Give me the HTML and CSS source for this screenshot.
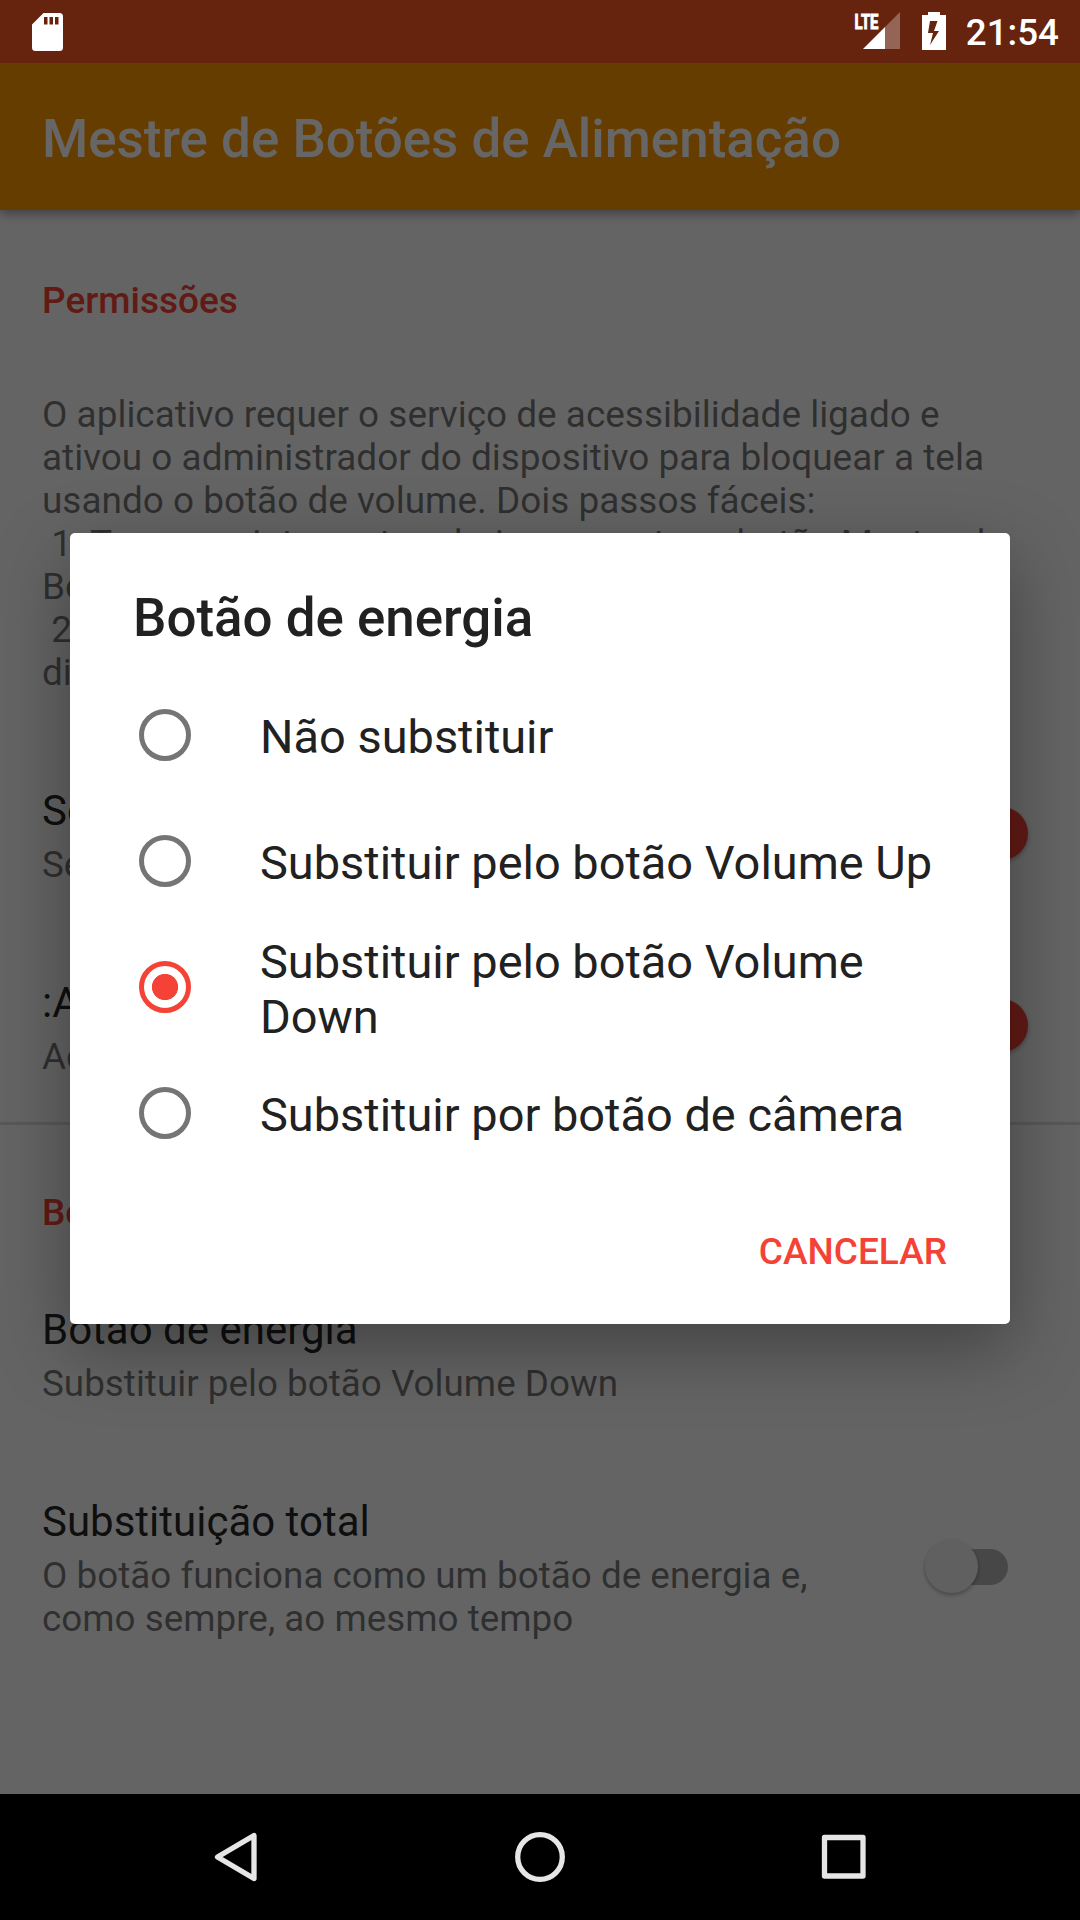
FILE: index.html
```html
<!DOCTYPE html>
<html lang="pt">
<head>
    <meta charset="UTF-8">
    <meta name="viewport" content="width=device-width, initial-scale=1.0">
    <title>Mestre de Botões de Alimentação</title>
    <link rel="stylesheet" href="styles.css">
</head>
<body>
    <div class="screen">
        <!-- Status bar -->
        <div class="status-bar">
            <svg class="sd-icon" width="31" height="38" viewBox="0 0 31 38">
                <path fill="#fff" fill-rule="evenodd" d="M11.500 0H27.500a3.500 3.500 0 0 1 3.500 3.500V34.500a3.500 3.500 0 0 1-3.500 3.500H3.500A3.500 3.500 0 0 1 0 34.500V11.500zM12 4v7.500h3.500V4zM17.500 4v7.500h3.500V4zM23 4v7.500h3.500V4z"/>
            </svg>
            <div class="status-right">
                <svg class="signal-icon" width="46" height="38" viewBox="0 0 46 38">
                    <path fill="#fff" fill-opacity="0.3" d="M46 0v37H31V15z"/>
                    <path fill="#fff" d="M31 15v22H9z"/>
                    <text x="0.500" y="17" class="lte" textLength="24" lengthAdjust="spacingAndGlyphs">LTE</text>
                </svg>
                <svg class="battery-icon" width="24" height="38" viewBox="0 0 24 38">
                    <path fill="#fff" fill-rule="evenodd" d="M6 0h12v3h6v35H0V3h6zM8 9L6 21h5L8 33L17 19h-5L15.500 9z"/>
                </svg>
                <span class="clock">21:54</span>
            </div>
        </div>

        <header class="app-bar">
            <h1>Mestre de Botões de Alimentação</h1>
        </header>

        <main class="settings">
            <h2 class="category">Permissões</h2>
            <p class="description">O aplicativo requer o serviço de acessibilidade ligado e<br>ativou o administrador do dispositivo para bloquear a tela<br>usando o botão de volume. Dois passos fáceis:<br>&nbsp;1. Toque no interruptor abaixo e mostre o botão Mestre de<br>Bo<br>&nbsp;2.<br>di</p>
            <div class="pref">
                <div class="pref-text">
                    <div class="pref-title">Se</div>
                    <div class="pref-summary">Se</div>
                </div>
                <div class="switch on"></div>
            </div>
            <div class="pref">
                <div class="pref-text">
                    <div class="pref-title">:A</div>
                    <div class="pref-summary">Ad</div>
                </div>
                <div class="switch on"></div>
            </div>

            <h2 class="category divided">Bo</h2>
            <div class="pref">
                <div class="pref-text">
                    <div class="pref-title">Botão de energia</div>
                    <div class="pref-summary">Substituir pelo botão Volume Down</div>
                </div>
            </div>
            <div class="pref">
                <div class="pref-text">
                    <div class="pref-title">Substituição total</div>
                    <div class="pref-summary">O botão funciona como um botão de energia e,<br>como sempre, ao mesmo tempo</div>
                </div>
                <div class="switch"></div>
            </div>
        </main>

        <nav class="nav-bar">
            <svg width="50" height="50" viewBox="0 0 50 50"><path d="M43 3.500v43L6.500 25z"/></svg>
            <svg width="50" height="50" viewBox="0 0 50 50"><circle cx="25" cy="25" r="22.300"/></svg>
            <svg width="50" height="50" viewBox="0 0 50 50"><rect x="5.500" y="5.500" width="38.500" height="38.500"/></svg>
        </nav>

        <!-- Dialog over the settings list -->
        <div class="scrim">
            <div class="dialog">
                <h2>Botão de energia</h2>
                <div class="option"><span class="radio"></span><span class="label">Não substituir</span></div>
                <div class="option"><span class="radio"></span><span class="label">Substituir pelo botão Volume Up</span></div>
                <div class="option"><span class="radio checked"></span><span class="label">Substituir pelo botão Volume<br>Down</span></div>
                <div class="option"><span class="radio"></span><span class="label">Substituir por botão de câmera</span></div>
                <button type="button">CANCELAR</button>
            </div>
        </div>
    </div>
</body>
</html>
```
FILE: styles.css
```css
* {
    box-sizing: border-box;
}
body {
    margin: 0;
    font-family: Roboto, sans-serif;
    background: #fafafa;
}
h1, h2, p {
    margin: 0;
}
.screen {
    position: relative;
    display: flex;
    flex-direction: column;
    width: 1080px;
    height: 1920px;
    overflow: hidden;
}

/* system bars */
.status-bar {
    position: relative;
    z-index: 2;
    display: flex;
    flex: none;
    justify-content: space-between;
    height: 63px;
    padding: 0 21px 0 32px;
    background: #66230e;
}
.sd-icon {
    margin-top: 12.5px;
}
.status-right {
    display: flex;
}
.signal-icon {
    margin-top: 12px;
    overflow: visible;
}
.battery-icon {
    margin: 12px 20px 0 22px;
}
.lte {
    fill: #fff;
    stroke: #fff;
    stroke-width: 1;
    font-size: 21px;
    font-weight: 700;
}
.clock {
    color: #fff;
    font-size: 36.75px;
    font-weight: 500;
    line-height: 66px;
}
.nav-bar {
    position: relative;
    z-index: 2;
    display: flex;
    flex: none;
    justify-content: center;
    align-items: center;
    gap: 254px;
    height: 126px;
    background: #000;
}
.nav-bar svg {
    fill: none;
    stroke: #e6e6e6;
    stroke-width: 5.3;
    stroke-linejoin: round;
}

/* settings page */
.app-bar {
    position: relative;
    z-index: 1;
    flex: none;
    height: 147px;
    padding-left: 42px;
    background: #ff9800;
    box-shadow: 0 4px 10px rgba(0, 0, 0, 0.35);
}
.app-bar h1 {
    color: #fff;
    font-size: 52.9px;
    font-weight: 500;
    line-height: 152px;
}
.settings {
    flex: 1;
    min-height: 0;
}
.category {
    height: 133px;
    padding: 69px 42px 0;
    color: #f44336;
    font-size: 37px;
    font-weight: 500;
    line-height: 43px;
}
.category.divided {
    margin-top: 2px;
    border-top: 3px solid #dbdbdb;
    padding-top: 66px;
}
.description {
    padding: 50px 42px 42px;
    color: rgba(0, 0, 0, 0.54);
    font-size: 36.95px;
    line-height: 43px;
    white-space: nowrap;
}
.pref {
    display: flex;
    justify-content: space-between;
    align-items: center;
    padding: 50px 50px 42px 42px;
}
.pref-title {
    margin-bottom: 8px;
    color: rgba(0, 0, 0, 0.87);
    font-size: 42px;
    line-height: 49px;
}
.pref-summary {
    color: rgba(0, 0, 0, 0.54);
    font-size: 36.85px;
    line-height: 43px;
}
.switch {
    position: relative;
    width: 105px;
    height: 53px;
    margin-bottom: 5px;
}
.switch::before {
    content: "";
    position: absolute;
    left: 22px;
    top: 9px;
    width: 61px;
    height: 36px;
    border-radius: 18px;
    background: #b2b2b2;
}
.switch::after {
    content: "";
    position: absolute;
    left: 0;
    top: 0;
    width: 53px;
    height: 53px;
    border-radius: 50%;
    background: #f1f1f1;
    box-shadow: 0 2px 4px rgba(0, 0, 0, 0.3);
}
.switch.on::before {
    background: #f8a19b;
}
.switch.on::after {
    left: 50px;
    background: #f44336;
}

/* dialog */
.scrim {
    position: absolute;
    inset: 0;
    z-index: 1;
    background: rgba(0, 0, 0, 0.6);
}
.dialog {
    display: flex;
    flex-direction: column;
    width: 940px;
    height: 791px;
    margin: 533px 0 0 70px;
    padding: 55px 63px 0;
    border-radius: 5px;
    background: #fff;
    box-shadow: 0 24px 72px rgba(0, 0, 0, 0.34);
    color: #212121;
}
.dialog h2 {
    height: 84px;
    font-size: 52.9px;
    font-weight: 500;
    line-height: 60px;
}
.option {
    display: flex;
    align-items: center;
    height: 126px;
    padding-left: 6px;
    font-size: 46.95px;
    line-height: 55px;
}
.radio {
    flex: none;
    width: 52px;
    height: 52px;
    margin-right: 69px;
    border: 5px solid #757575;
    border-radius: 50%;
}
.radio.checked {
    border-color: #f44336;
    background: radial-gradient(circle, #f44336 12.7px, transparent 13.5px);
}
.label {
    padding-top: 3px;
}
.dialog button {
    align-self: flex-end;
    margin-top: 54px;
    padding: 0;
    border: none;
    background: none;
    color: #f44336;
    font-family: inherit;
    font-size: 37px;
    font-weight: 500;
    line-height: 43px;
}
```
